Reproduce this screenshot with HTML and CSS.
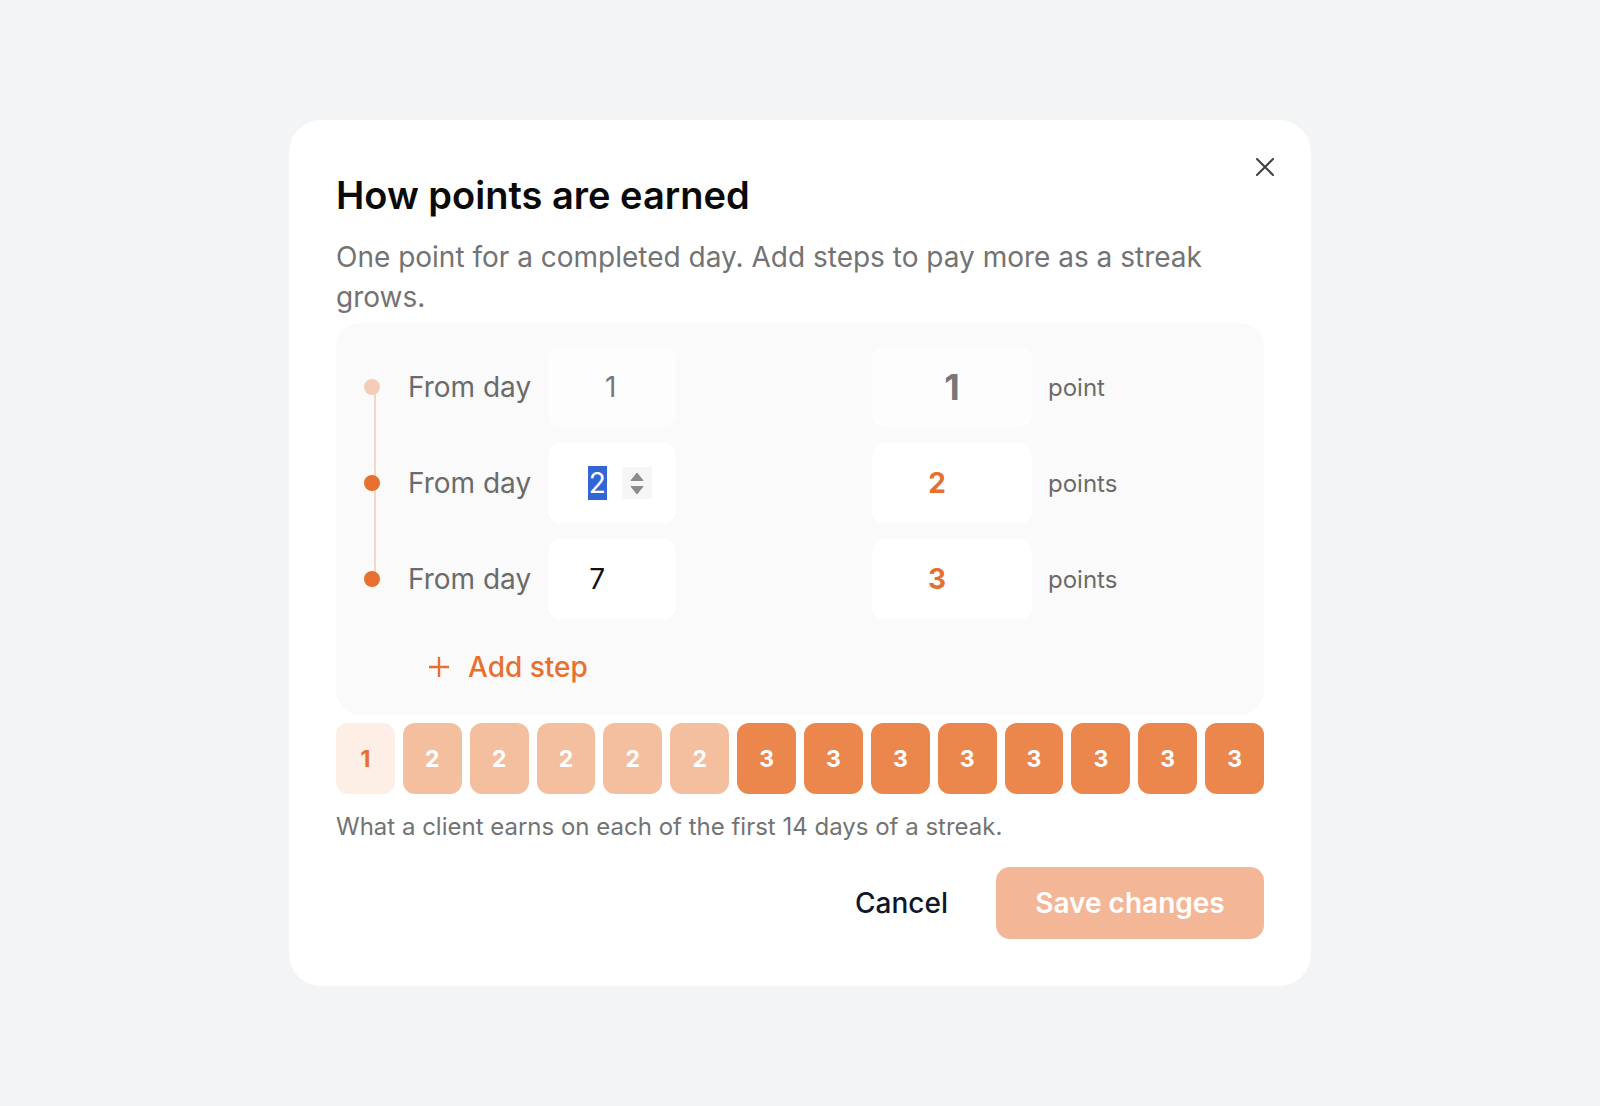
FILE: index.html
```html
<!DOCTYPE html>
<html lang="en">
<head>
<meta charset="UTF-8">
<title>How points are earned</title>
<link rel="stylesheet" href="styles.css">
</head>
<body>

<div class="overlay">
  <div class="modal">
    <button class="close" aria-label="Close">
      <svg viewBox="0 0 18 18" width="18" height="18"><path d="M1 1 L17 17 M17 1 L1 17" stroke="#3f3f46" stroke-width="2" stroke-linecap="round" fill="none"/></svg>
    </button>

    <h1 class="title">How points are earned</h1>
    <p class="lead">One point for a completed day. Add steps to pay more as a streak grows.</p>

    <div class="steps">
      <div class="step-list">
        <div class="step step-base">
          <span class="dot"></span>
          <span class="step-label">From day</span>
          <div class="field field-day locked"><span class="value">1</span></div>
          <div class="field field-points locked"><span class="value">1</span></div>
          <span class="unit">point</span>
        </div>
        <div class="step">
          <span class="dot"></span>
          <span class="step-label">From day</span>
          <div class="field field-day">
            <span class="value"><span class="selected">2</span></span>
            <span class="spinner">
              <svg viewBox="0 0 30 32" width="30" height="32"><path d="M15 6 L21 13.5 L9 13.5 Z M15 27 L21 19.5 L9 19.5 Z" fill="#8c8c8c" stroke="#8c8c8c" stroke-width="1" stroke-linejoin="round"/></svg>
            </span>
          </div>
          <div class="field field-points"><span class="value">2</span></div>
          <span class="unit">points</span>
        </div>
        <div class="step">
          <span class="dot"></span>
          <span class="step-label">From day</span>
          <div class="field field-day"><span class="value">7</span></div>
          <div class="field field-points"><span class="value">3</span></div>
          <span class="unit">points</span>
        </div>
      </div>

      <button class="add-step">
        <svg viewBox="0 0 22 22" width="22" height="22"><path d="M11 1 V21 M1 11 H21" stroke="#e8702f" stroke-width="2.4" fill="none"/></svg>
        Add step
      </button>
    </div>

    <div class="preview">
      <span class="day tier-1">1</span>
      <span class="day tier-2">2</span>
      <span class="day tier-2">2</span>
      <span class="day tier-2">2</span>
      <span class="day tier-2">2</span>
      <span class="day tier-2">2</span>
      <span class="day tier-3">3</span>
      <span class="day tier-3">3</span>
      <span class="day tier-3">3</span>
      <span class="day tier-3">3</span>
      <span class="day tier-3">3</span>
      <span class="day tier-3">3</span>
      <span class="day tier-3">3</span>
      <span class="day tier-3">3</span>
    </div>
    <p class="hint">What a client earns on each of the first 14 days of a streak.</p>

    <div class="actions">
      <button class="btn-cancel">Cancel</button>
      <button class="btn-save" disabled>Save changes</button>
    </div>
  </div>
</div>

</body>
</html>
```

FILE: styles.css
```css
body { margin: 0; font-family: 'Inter', 'Noto Sans', sans-serif; background: #f3f4f6; color: #0a0a0a; }
button { font-family: inherit; }

.overlay {
  height: 100vh;
  display: flex;
  align-items: center;
  justify-content: center;
}
.modal {
  position: relative;
  width: 1022px;
  box-sizing: border-box;
  padding: 47px;
  background: #fff;
  border-radius: 32px;
}
.close {
  position: absolute;
  top: 38px;
  right: 37px;
  width: 18px;
  height: 18px;
  padding: 0;
  border: none;
  background: none;
  cursor: pointer;
}
.close svg { display: block; }

.title {
  margin: 0;
  font-size: 38px;
  line-height: 56px;
  font-weight: 600;
}
.lead {
  margin: 14px 0 6px;
  font-size: 28px;
  line-height: 40px;
  color: #737373;
}

/* step editor */
.steps {
  background: #fafafa;
  border-radius: 24px;
  padding: 24px;
}
.step-list {
  position: relative;
  display: flex;
  flex-direction: column;
  gap: 16px;
}
.step-list::before {
  content: "";
  position: absolute;
  left: 14px;
  top: 40px;
  bottom: 40px;
  width: 2px;
  background: rgba(232, 112, 47, 0.25);
}
.step {
  display: flex;
  align-items: center;
  height: 80px;
}
.dot {
  position: relative;
  width: 16px;
  height: 16px;
  margin: 0 4px;
  border-radius: 50%;
  background: #e8702f;
}
.step-base .dot { background: #f5cdb6; }
.step-label {
  margin-left: 24px;
  font-size: 28px;
  color: #6b6b6b;
}
.field {
  display: flex;
  align-items: center;
  height: 80px;
  box-sizing: border-box;
  padding-right: 30px;
  background: #fff;
  border-radius: 12px;
  position: relative;
}
.field .value { flex: 1; text-align: center; }
.field-day {
  width: 128px;
  margin-left: 17px;
  font-size: 28px;
  color: #111;
}
.field-points {
  width: 160px;
  margin-left: auto;
  font-size: 28px;
  font-weight: 700;
  color: #e8702f;
}
.field.locked { background: #fdfdfd; padding-right: 0; color: #777; }
.field-day.locked .value { padding-right: 3px; }
.field-points.locked { font-size: 36px; }
.selected {
  background: #3166d4;
  color: #fff;
  padding: 0 1px;
  line-height: 34px;
  display: inline-block;
}
.spinner {
  position: absolute;
  right: 24px;
  top: 24px;
  width: 30px;
  height: 32px;
  background: #f6f6f6;
}
.spinner svg { display: block; }
.unit {
  width: 192px;
  margin-left: 16px;
  font-size: 24px;
  color: #6b6b6b;
}

.add-step {
  display: flex;
  align-items: center;
  gap: 18px;
  height: 48px;
  margin: 24px 0 0 45px;
  padding: 0 23px;
  border: none;
  background: none;
  font-size: 28px;
  font-weight: 500;
  color: #e8702f;
  cursor: pointer;
}

/* 14-day preview */
.preview {
  display: flex;
  gap: 8px;
  margin-top: 8px;
}
.day {
  flex: 1;
  height: 71px;
  border-radius: 12px;
  display: flex;
  align-items: center;
  justify-content: center;
  font-size: 23px;
  font-weight: 700;
  color: #fff;
}
.tier-1 { background: #fdeee6; color: #e8702f; }
.tier-2 { background: #f4bf9f; }
.tier-3 { background: #eb864d; }
.hint {
  margin: 17px 0 0;
  font-size: 24px;
  line-height: 32px;
  color: #737373;
}

.actions {
  display: flex;
  justify-content: flex-end;
  gap: 24px;
  margin-top: 24px;
}
.btn-cancel {
  height: 72px;
  padding: 0 24px;
  border: none;
  background: none;
  font-size: 28px;
  font-weight: 500;
  color: #0f172a;
  cursor: pointer;
}
.btn-save {
  width: 268px;
  height: 72px;
  border: none;
  border-radius: 14px;
  background: #f3b797;
  font-size: 28px;
  font-weight: 600;
  color: #fff;
}
```
